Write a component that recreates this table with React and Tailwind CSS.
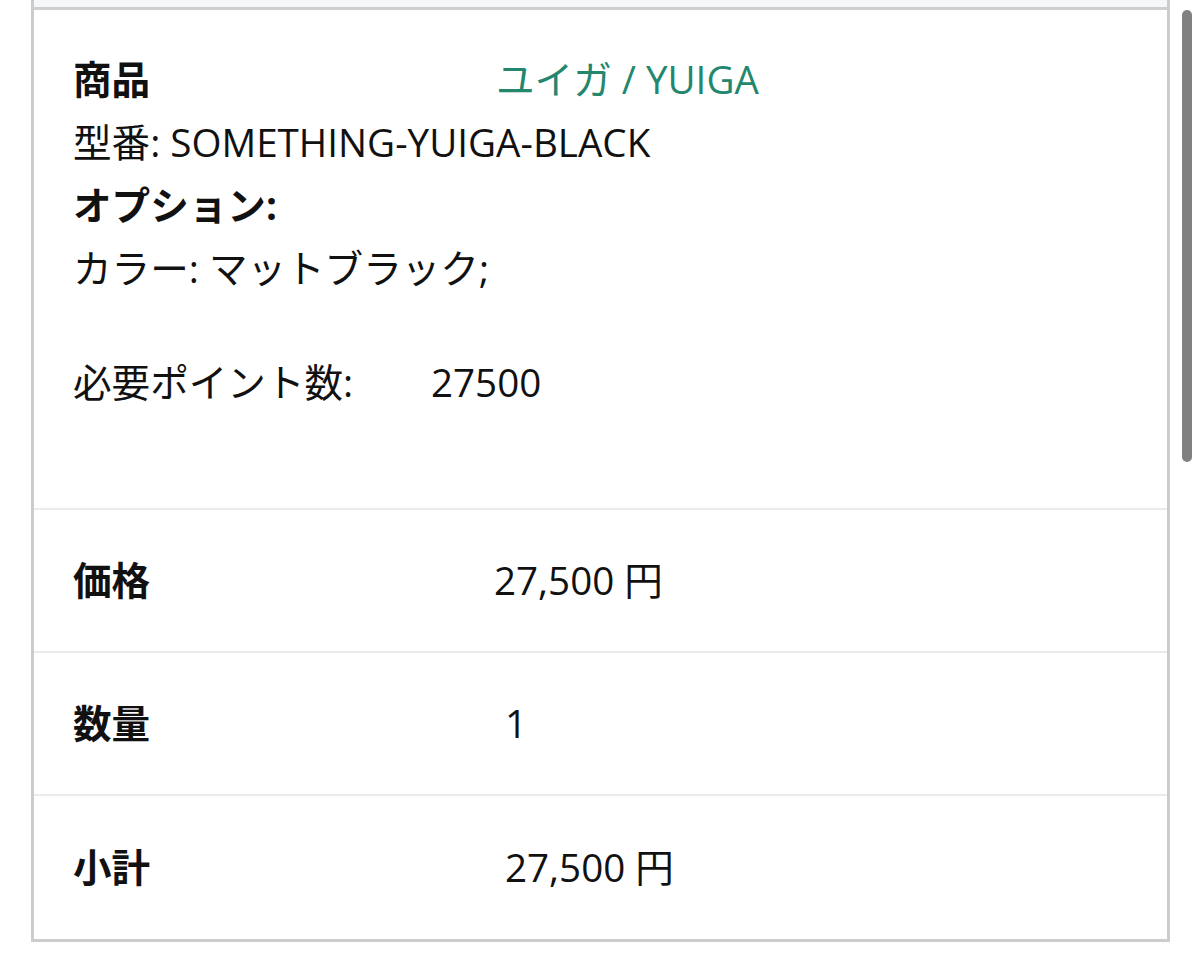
import React from "react";

const rows = [
  { label: "価格", value: "27,500 円", labelWidth: "w-[421px]" },
  { label: "数量", value: "1", labelWidth: "w-[432px]" },
  { label: "小計", value: "27,500 円", labelWidth: "w-[432px]" },
];

const App = () => {
  return (
    <div
      className="relative w-full h-[962px] bg-white text-[#111] overflow-hidden"
      style={{ fontFamily: '"Open Sans", "Noto Sans CJK JP", sans-serif' }}
    >
      <div className="ml-[31px] w-[1139px] border-x-[3px] border-b-[3px] border-[#cccccc] text-[38.6px] leading-[63px]">
        <div className="h-[10px] bg-[#f5f7fa] border-b-[3px] border-[#cfcfcf]" />

        {/* product row */}
        <div className="h-[500px] pl-[39px] pt-[38px] border-b-2 border-[#ebebeb]">
          <div className="flex">
            <span className="w-[423px] shrink-0 font-bold">商品</span>
            <span className="text-[#23876d]">ユイガ / YUIGA</span>
          </div>
          <div>型番: SOMETHING-YUIGA-BLACK</div>
          <div className="font-bold">オプション:</div>
          <div>カラー: マットブラック;</div>
          <div className="flex mt-[51px]">
            <span className="w-[358px] shrink-0">必要ポイント数:</span>
            <span>27500</span>
          </div>
        </div>

        {rows.map((row, i) => (
          <div
            key={row.label}
            className={
              "flex items-center h-[143px] pl-[39px] " +
              (i < rows.length - 1 ? "border-b-2 border-[#ebebeb]" : "")
            }
          >
            <span className={"font-bold shrink-0 " + row.labelWidth}>{row.label}</span>
            <span>{row.value}</span>
          </div>
        ))}
      </div>

      {/* overlay scrollbar */}
      <div className="absolute left-[1182px] top-[10px] w-[10px] h-[452px] rounded-full bg-[#808080]" />
    </div>
  );
};

export default App;
